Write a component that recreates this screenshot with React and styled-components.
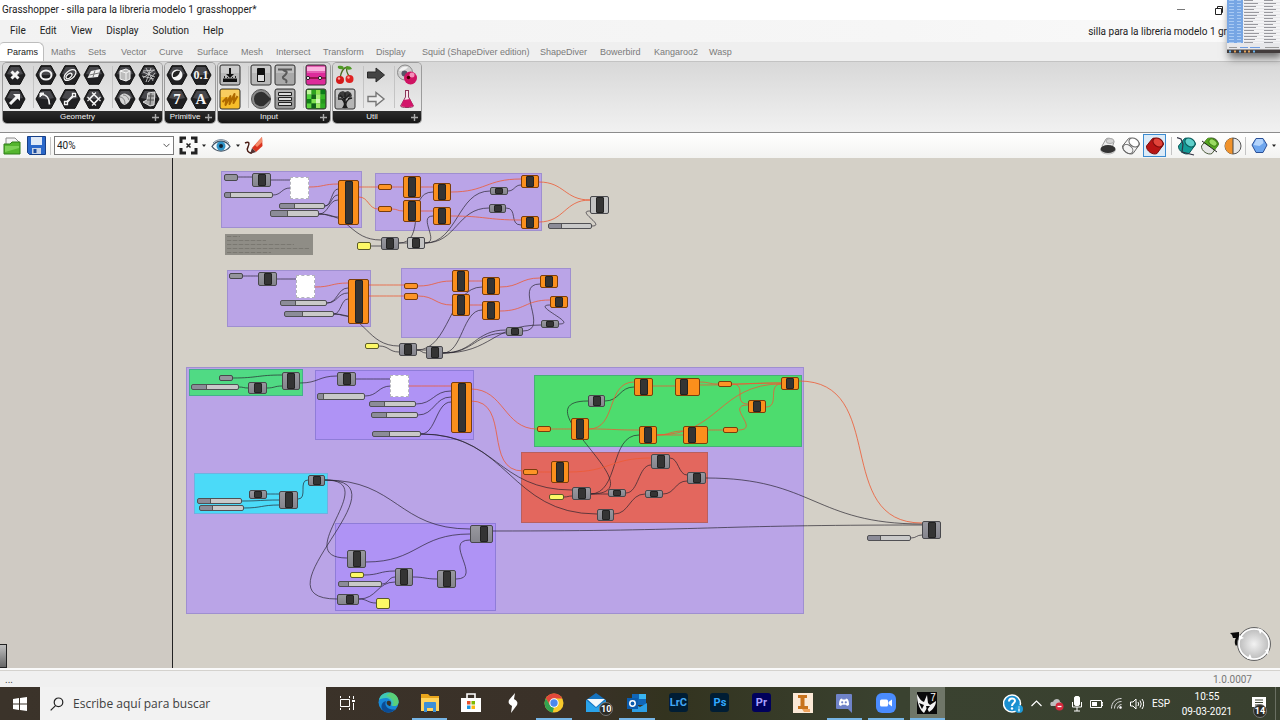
import React from "react";
import styled, { createGlobalStyle, css } from "styled-components";

const UI = `Roboto, "Open Sans", sans-serif`;
const RIBBON = `"Liberation Sans", Arial, sans-serif`;

const Global = createGlobalStyle`
  *, *::before, *::after { box-sizing: border-box; }
  body { margin: 0; background: #f0f0f0; font-family: ${UI}; color: #222; }
  button { font: inherit; color: inherit; background: none; border: 0; padding: 0; }
  svg { display: block; }
`;

const Page = styled.div`
  position: relative;
  display: flex;
  flex-direction: column;
  min-height: 100vh;
  overflow: hidden;
`;

/* ---------- window chrome ---------- */
const TitleBar = styled.header`
  display: flex;
  align-items: center;
  justify-content: space-between;
  height: 20px;
  padding: 0 56px 0 2px;
  background: #fff;
`;
const Title = styled.h1`
  margin: 0;
  font-size: 10px;
  font-weight: 400;
  line-height: 20px;
`;
const WindowButtons = styled.div`
  display: flex;
  gap: 28px;
`;
const MenuBar = styled.nav`
  display: flex;
  align-items: center;
  height: 22px;
  padding: 0 53px 0 10px;
  background: linear-gradient(90deg, #f2f2f2, #f6f6f6 70%, #fafafa);
  font-size: 10px;
`;
const MenuItem = styled.button`
  margin-right: 14px;
  line-height: 20px;
`;
const DocumentName = styled.span`
  margin-left: auto;
  white-space: nowrap;
`;
const TabStrip = styled.div`
  display: grid;
  grid-template-columns: 44px 37px 33px 38px 38px 44px 35px 47px 53px 46px 118px 60px 54px 55px 1fr;
  height: 19px;
  background: #efefef;
  font-family: ${RIBBON};
  font-size: 9px;
`;
const Tab = styled.button`
  padding-left: 7px;
  text-align: left;
  line-height: 20px;
  white-space: nowrap;
  color: #7a7a7a;
  ${(p) =>
    p.$active &&
    css`
      height: 20px;
      background: #fff;
      color: #222;
      border: 1px solid #bdbdbd;
      border-bottom: 0;
      border-left: 0;
      border-radius: 4px 6px 0 0;
      line-height: 17px;
    `}
`;

/* ---------- ribbon ---------- */
const Ribbon = styled.div`
  display: flex;
  align-items: flex-start;
  gap: 3px;
  height: 72px;
  padding: 1px 3px;
  border-top: 1px solid #c3c3c3;
  border-bottom: 1px solid #8c8c8c;
  background: linear-gradient(#d8d8d8, #f1f1f1);
`;
const Panel = styled.section`
  width: ${(p) => p.$width}px;
  height: 60px;
  border-radius: 4px;
  overflow: hidden;
  background: linear-gradient(#d6d6d6, #f0f0f0);
  box-shadow: 0 0 0 1px #9c9c9c;
  display: flex;
  flex-direction: column;
  justify-content: space-between;
`;
const PanelIcons = styled.div`
  display: flex;
  gap: 7px;
`;
const IconGroup = styled.div`
  display: grid;
  grid-template-columns: repeat(${(p) => p.$cols}, 24px);
  grid-auto-rows: 24px;
  & + & { box-shadow: -4px 0 0 -3px #c4c4c4; }
`;
const IconButton = styled.button`
  display: grid;
  place-items: center;
`;
const PanelLabel = styled.div`
  display: grid;
  grid-template-columns: 1fr 10px;
  align-items: center;
  height: 12px;
  background: linear-gradient(#2c2c2c, #141414);
  color: #f2f2f2;
  font-family: ${RIBBON};
  font-size: 8px;
  line-height: 12px;
  text-align: center;
`;

/* ---------- canvas toolbar ---------- */
const Toolbar = styled.div`
  display: flex;
  align-items: center;
  justify-content: space-between;
  height: 25px;
  padding: 0 4px 0 2px;
  background: linear-gradient(#fff, #f3f3f1);
`;
const ToolSet = styled.div`
  display: flex;
  align-items: center;
  gap: ${(p) => p.$gap}px;
`;
const ToolButton = styled.button`
  display: grid;
  place-items: center;
  width: ${(p) => p.$w || 22}px;
  height: 23px;
  ${(p) => p.$on && css`background: #dcebf8; border: 1px solid #3b8bd0;`}
`;
const Divider = styled.span`
  width: 1px;
  height: 18px;
  background: #c4c4c4;
`;
const ZoomField = styled.label`
  display: grid;
  width: 120px;
  height: 19px;
  border: 1px solid #7b7b7b;
  background: #fff;
  align-items: center;
  & > * { grid-area: 1 / 1; }
  & > svg { justify-self: end; margin-right: 3px; pointer-events: none; }
`;
const ZoomSelect = styled.select`
  appearance: none;
  width: 100%;
  height: 17px;
  padding: 0 2px;
  border: 0;
  background: none;
  font-family: ${UI};
  font-size: 10px;
  line-height: 16px;
  color: #222;
`;

/* ---------- canvas ---------- */
const Canvas = styled.main`
  position: relative;
  flex: 1;
  min-height: 510px;
  overflow: hidden;
  background: linear-gradient(90deg, #cfcac3 172px, #222 172px, #222 173px, #d4d0c7 173px);
`;
const WireLayer = styled.svg`
  position: absolute;
  inset: 0;
  width: 100%;
  height: 100%;
`;
const Placed = styled.div`
  position: absolute;
`;
const Group = styled(Placed)`
  background: ${(p) => p.$fill};
  border: 1px solid ${(p) => p.$edge};
`;
const Component = styled(Placed)`
  display: grid;
  grid-template-columns: ${(p) => (p.$bar ? `${p.$bar}px` : "1fr")} 8px 1fr;
  border: 1px solid ${(p) => (p.$tone === "orange" ? "#7a3d0c" : "#48484c")};
  border-radius: 2px;
  background: ${(p) =>
    ({ orange: "#fb8f1c", light: "#c2c2c2", gray: "linear-gradient(#98989f, #85858d)" })[p.$tone]};
  &::before {
    content: "";
    grid-column: 2;
    background: #343434;
    border: 1px solid #222;
    border-radius: 1px;
  }
`;
const Param = styled(Placed)`
  border: 1px solid ${(p) => ({ orange: "#7a3d0c", yellow: "#5a5a28", gray: "#48484c" })[p.$tone]};
  border-radius: 2px;
  background: ${(p) => ({ orange: "#fd9426", yellow: "#fdf966", gray: "#94949c" })[p.$tone]};
`;
const Slider = styled(Placed)`
  border: 1px solid #505054;
  border-radius: 2px;
  background: linear-gradient(90deg, #8c8c98 ${(p) => p.$grip}px, #555 ${(p) => p.$grip}px, #555 ${(p) => p.$grip + 1}px, #c9c9c9 ${(p) => p.$grip + 1}px);
`;
const Graph = styled(Placed)`
  background: #fff;
  border: 1px dashed #b4b4bc;
`;
const Note = styled(Placed)`
  padding: 2px;
  background: #8f8d86;
  display: grid;
  align-content: space-between;
`;
const NoteLine = styled.i`
  width: ${(p) => p.$w}%;
  height: 1px;
  background: repeating-linear-gradient(90deg, #7a7871 0 4px, #88867f 4px 6px);
`;
const EdgeTab = styled.div`
  position: absolute;
  left: 0;
  bottom: 0;
  width: 7px;
  height: 24px;
  border: 1px solid #222;
  border-left: 0;
  background: linear-gradient(#c0c0c0, #666);
`;
const Compass = styled.svg`
  position: absolute;
  right: 7px;
  bottom: 5px;
`;
const StatusBar = styled.footer`
  display: flex;
  justify-content: space-between;
  align-items: center;
  height: 19px;
  padding: 2px 28px 0 5px;
  border-top: 2px solid #fafafa;
  background: #f0f0f0;
  box-shadow: inset 0 1px 0 #d4d2ce;
  font-size: 10px;
  line-height: 14px;
  color: #444;
`;
const Version = styled.span`
  color: #777;
`;

/* ---------- taskbar ---------- */
const Taskbar = styled.footer`
  display: flex;
  height: 33px;
  background: linear-gradient(90deg, #3b332a, #3a3128 45%, #33331f 52%, #3a4230 70%, #39402f);
  color: #fff;
`;
const StartButton = styled.button`
  display: grid;
  place-items: center;
  width: 40px;
`;
const SearchBox = styled.label`
  display: flex;
  align-items: center;
  gap: 9px;
  width: 286px;
  padding-left: 10px;
  background: #f2f2f2;
`;
const SearchInput = styled.input`
  flex: 1;
  min-width: 0;
  border: 0;
  padding: 0;
  background: none;
  font-family: "Open Sans", sans-serif;
  font-size: 12px;
  line-height: 20px;
  &::placeholder { color: #404040; opacity: 1; }
`;
const Apps = styled.div`
  display: grid;
  grid-template-columns: repeat(15, 1fr);
  width: 622px;
`;
const AppButton = styled.button`
  position: relative;
  display: grid;
  place-items: center;
  margin: 0 3px;
  border-bottom: 2px solid ${(p) => (p.$open ? "#76b5e6" : "transparent")};
  background: ${(p) => (p.$focused ? "#6f7668" : "none")};
`;
const AdobeTile = styled.span`
  width: 19px;
  height: 19px;
  border-radius: 3px;
  background: ${(p) => p.$bg};
  color: ${(p) => p.$fg};
  font-size: 11px;
  font-weight: 700;
  line-height: 19px;
  text-align: center;
`;
const CountBadge = styled.span`
  position: absolute;
  right: ${(p) => p.$right}px;
  bottom: 2px;
  width: 14px;
  height: 14px;
  border-radius: 50%;
  border: 1px solid #777;
  background: #2b2b26;
  font-size: 9px;
  font-weight: 700;
  line-height: 12px;
  text-align: center;
`;
const Tray = styled.div`
  display: flex;
  align-items: center;
  gap: 8px;
  margin-left: auto;
  padding-right: 4px;
`;
const TrayText = styled.span`
  font-size: 10px;
  line-height: 15px;
  white-space: nowrap;
  text-align: center;
`;
const Clock = styled.time`
  width: 58px;
  font-size: 10px;
  line-height: 15px;
  text-align: center;
`;
const Notifications = styled.button`
  position: relative;
  width: 32px;
  height: 33px;
  display: grid;
  place-items: center;
  border-right: 1px solid #6a6f62;
`;
const Thumbnail = styled.div`
  position: absolute;
  top: 0;
  right: 0;
  box-shadow: 2px 5px 8px rgba(0, 0, 0, 0.55);
`;

/* ---------- ribbon icons ---------- */
const Hex = ({ children }) => (
  <svg width="22" height="22" viewBox="0 0 22 22">
    <path d="M1 11 6 1.700h10L21 11l-5 9.300H6z" fill="#202022" stroke="#111" strokeLinejoin="round" />
    <path d="M3 10 6.800 3h8.400L19 10c-5 1.500-11 1.500-16 0z" fill="#48484c" />
    <g fill="none" stroke="#f4f4f4" strokeWidth="1.700">{children}</g>
  </svg>
);
const Tile = ({ fill = "#b9b9b9", children }) => (
  <svg width="22" height="22" viewBox="0 0 22 22">
    <rect x="1" y="1" width="20" height="20" rx="2" fill={fill} stroke="#333" />
    <path d="M2 2h18v7H2z" fill="#fff" opacity=".25" />
    {children}
  </svg>
);
const Plain = ({ children }) => <svg width="22" height="22" viewBox="0 0 22 22">{children}</svg>;
const serif = { fontFamily: '"Liberation Serif", serif', fontWeight: 700, fill: "#f4f4f4", stroke: "none", textAnchor: "middle" };

const GREEN = ["#bff59b", "#2ea31f", "#8be04c", "#0b7d1a", "#4fd43c", "#16651a", "#aaf07a", "#36b827", "#127f18", "#7fe352", "#d2f9b9", "#26991f", "#5cd53e", "#10601a", "#9bea63", "#2fae26"];

const PANELS = [
  {
    name: "Geometry", width: 159,
    groups: [
      { cols: 1, icons: [
        ["Point", <Hex><path d="m7.500 7.500 7 7m0-7-7 7" strokeWidth="3" /></Hex>],
        ["Vector", <Hex><path d="m6 16 7-7" strokeWidth="3" /><path d="M9 6h7v7z" fill="#f4f4f4" stroke="none" /></Hex>],
      ] },
      { cols: 3, icons: [
        ["Circle", <Hex><ellipse cx="11" cy="11" rx="5.500" ry="4.500" strokeWidth="2" /></Hex>],
        ["Curve", <Hex><ellipse cx="11" cy="11" rx="7" ry="4" transform="rotate(-40 11 11)" strokeWidth="1.200" /><ellipse cx="10" cy="12" rx="3.500" ry="2" transform="rotate(-40 10 12)" strokeWidth="1.200" /></Hex>],
        ["Plane", <Hex><path d="M4.500 14 8 7l9.500-2-2.500 8z" fill="#eee" stroke="none" /><path d="M6.500 11 16 9M12 6.500 10 13" stroke="#777" strokeWidth="1" /></Hex>],
        ["Circular Arc", <Hex><path d="M6.500 6.500c5 0 8 4 8 10" /><path d="M5 9V5h4z" fill="#f4f4f4" strokeWidth="1" /></Hex>],
        ["Line", <Hex><path d="m7.500 14.500 7-7" strokeWidth="2.200" /><path d="M5.500 13.500h3v3h-3zM13.500 5.500h3v3h-3z" fill="#222" strokeWidth="1.300" /></Hex>],
        ["Rectangle", <Hex><path d="m11 6.500 4.500 4.500-4.500 4.500L6.500 11z" /><path d="m9 4.500 2 2 2-2M9 17.500l2-2 2 2M4.500 9l2 2-2 2M17.500 9l-2 2 2 2" strokeWidth="1.200" /></Hex>],
      ] },
      { cols: 2, icons: [
        ["Box", <Hex><path d="m6 7 6-2 4 2v8l-4 2-6-2z" fill="#bcbcbc" strokeWidth="1" /><path d="m6 7 6 2 4-2M12 9v8" strokeWidth="1" /></Hex>],
        ["Mesh", <Hex><path d="m5 8 12 5M4 12l12 3M8 4l7 13M13 4 8 18M5 14 16 6M10 18l7-9M5 7l12-1" stroke="#c9c9c9" strokeWidth=".9" /></Hex>],
        ["Brep", <Hex><path d="M5.500 9c3-5 7-4 11 0 0 4-3 7-6 8-3-1-5-4-5-8z" fill="#d5d5d5" stroke="none" /><path d="M6 9c3 0 5 3 5 7M9 7c3 0 5 2 6 5" stroke="#888" strokeWidth="1" /></Hex>],
        ["Surface", <Hex><path d="M10 5l7-1-1 13-4 1-7-4 4-2z" fill="#aaa" stroke="#ddd" strokeWidth="1" /><path d="M10 8h6M9 12h7M13 5l-1 12" stroke="#555" strokeWidth="1" /></Hex>],
      ] },
    ],
  },
  {
    name: "Primitive", width: 50,
    groups: [
      { cols: 2, icons: [
        ["Boolean", <Hex><circle cx="11" cy="11" r="5.500" fill="#f4f4f4" stroke="none" /><path d="M7 13c-1-5 3-7 7-6-1 4-3 6-7 6z" fill="#222" stroke="none" /></Hex>],
        ["Number", <Hex><text x="11" y="15" fontSize="12" {...serif}>0.1</text></Hex>],
        ["Integer", <Hex><text x="11" y="16" fontSize="15" {...serif}>7</text></Hex>],
        ["Text", <Hex><text x="11" y="16" fontSize="15" {...serif}>A</text></Hex>],
      ] },
    ],
  },
  {
    name: "Input", width: 112,
    groups: [
      { cols: 1, icons: [
        ["Number Slider", <Tile><path d="M10 4h2v6h3l-4 4-4-4h3zM4 14.500h14V18H4z" fill="#111" /><path d="M5.500 14v-2M8.500 14v-1M13.500 14v-1M16.500 14v-2" stroke="#222" /></Tile>],
        ["Graph Mapper", <Tile fill="#f7bd2a"><path d="m3.500 14 4-4-1 7 5-9-1 8 5-10-1 9 4-7" fill="none" stroke="#b06a00" strokeWidth="2" strokeLinejoin="round" /></Tile>],
      ] },
      { cols: 2, icons: [
        ["Toggle", <Tile><path d="M7.500 4.500h7v13h-7z" fill="#ddd" stroke="#111" /><path d="M8 5h6v6H8z" fill="#111" /></Tile>],
        ["Gene Pool", <Tile fill="#a9a9a9"><path d="M4 5.500h14M9 6c3 2 5 1 3 4s-4 2-3 4 5 1 3 5" fill="none" stroke="#5a5a5a" strokeWidth="2" /></Tile>],
        ["Knob", <Plain><circle cx="11" cy="11" r="9.500" fill="#8a8a8a" stroke="#555" /><path d="M4 11a7 7 0 0 1 12.500-4.500L21 11l-4.500 4.500A7 7 0 0 1 4 11z" fill="#303030" /></Plain>],
        ["Value List", <Tile fill="#9a9a9a"><path d="M4.500 4.500h13v3h-13zM4.500 9.500h13v3h-13zM4.500 14.500h13v3h-13z" fill="#ddd" stroke="#222" /></Tile>],
      ] },
      { cols: 1, icons: [
        ["Gradient", <Tile fill="#dd2b9a"><path d="M2 3h18v4H2z" fill="#fbb2df" /><path d="M1 14h20" stroke="#500" strokeWidth="1.200" /><circle cx="3" cy="14" r="1.600" fill="#fff" stroke="#222" /><circle cx="15" cy="14" r="1.600" fill="#fff" stroke="#222" /></Tile>],
        ["Image Sampler", <Tile fill="#2a8f1e">{GREEN.map((c, i) => <rect key={i} x={2 + (i % 4) * 4.5} y={2 + Math.floor(i / 4) * 4.5} width="4.500" height="4.500" fill={c} />)}</Tile>],
      ] },
    ],
  },
  {
    name: "Util", width: 88,
    groups: [
      { cols: 1, icons: [
        ["Cherry Picker", <Plain><path d="M6 14C7 8 9 4 13 3c-1 4 0 7 3 10" fill="none" stroke="#4a6a1c" strokeWidth="1.300" /><path d="M10 5C5 6 3 4 4 2c4-1 6 0 6 3zM11 4c3-3 6-2 7 1-3 1-5 1-7-1z" fill="#4f9a25" /><circle cx="6" cy="16" r="4" fill="#d31a1a" /><circle cx="15.500" cy="15" r="4" fill="#e02222" /><circle cx="5" cy="14.500" r="1.200" fill="#ff9d9d" /><circle cx="14.500" cy="13.500" r="1.200" fill="#ff9d9d" /></Plain>],
        ["Tree", <Tile fill="#b5b5b5"><path d="M10 20c1-4 1-6-2-9M12 20c-1-5 0-7 3-9M11 15V5M11 12 6 7M11 11l5-5M8 11l-4 0M14 11l4-1" fill="none" stroke="#1c1c1c" strokeWidth="1.500" /><path d="M4 7l2-3 3-1 2 1 3-1 3 2 1 3-2 2-2-1-2 1-2-1-2 1-2-1-2 2z" fill="#222" opacity=".85" /><path d="M8 20l2-3h2l2 3z" fill="#1c1c1c" /></Tile>],
      ] },
      { cols: 1, icons: [
        ["Relay", <Plain><path d="M2.500 8h8.500V4l8.500 7L11 18v-4H2.500z" fill="#444" stroke="#2a2a2a" /></Plain>],
        ["Jump", <Plain><path d="M3 8.500h8v-4l8 6.500-8 6.500v-4H3z" fill="#eee" stroke="#777" strokeWidth="1.400" /></Plain>],
      ] },
      { cols: 1, icons: [
        ["Cluster Input", <Plain><circle cx="9" cy="8.500" r="7.500" fill="#cfcfcf" stroke="#8a8a8a" /><circle cx="8.500" cy="9.500" r="3" fill="#556" /><path d="M3 7c1-4 6-5 9-4-2 3-6 4-9 4z" fill="#f2f2f2" /><circle cx="14.500" cy="14" r="6.500" fill="#cf1463" /><circle cx="16" cy="11" r="2.500" fill="#f58fba" /><circle cx="12.500" cy="13.500" r="1.700" fill="#400" /></Plain>],
        ["Galapagos", <Plain><path d="M9 2.500h4M9.500 3v6l-5 9c0 2 13 2 13 0l-5-9V3" fill="#f7e6ee" stroke="#8b3558" /><path d="m7.500 12 6.500-1 3.500 7c-1 1.500-11.500 1.500-12.500 0z" fill="#d3156a" /></Plain>],
      ] },
    ],
  },
];

/* ---------- diagram data, in window coordinates ---------- */
const ORIGIN_Y = 158;
const box = (x1, y1, x2, y2) => ({ left: x1, top: y1 - ORIGIN_Y, width: x2 - x1, height: y2 - y1 });

const LILAC = ["#baa4e7", "#9f8fd0"];
const VIOLET = ["#af93f5", "#8f7cd8"];
const groups = [
  [221, 171, 362, 228, ...LILAC],
  [375, 173, 542, 231, ...LILAC],
  [227, 270, 371, 327, ...LILAC],
  [401, 268, 571, 338, ...LILAC],
  [186, 367, 804, 614, ...LILAC],
  [189, 369, 303, 396, "#50da84", "#44b08a"],
  [315, 370, 474, 440, ...VIOLET],
  [534, 375, 802, 447, "#4ddc6e", "#45b077"],
  [521, 452, 708, 523, "#e3675e", "#b8605f"],
  [194, 473, 328, 514, "#4bdaf8", "#6fb2e0"],
  [335, 523, 496, 611, ...VIOLET],
];
const components = [
  ["gray", 252, 173, 271, 187], ["orange", 338, 180, 359, 225], ["gray", 381, 237, 399, 250],
  ["light", 407, 237, 425, 249], ["orange", 403, 176, 421, 198], ["orange", 403, 200, 421, 222],
  ["orange", 433, 183, 451, 201], ["orange", 433, 207, 451, 225], ["gray", 490, 187, 508, 195],
  ["gray", 489, 204, 506, 213], ["orange", 521, 175, 539, 188], ["orange", 521, 216, 539, 229],
  ["light", 590, 196, 609, 214],
  ["gray", 258, 272, 277, 286], ["orange", 348, 279, 369, 324], ["gray", 399, 343, 417, 356],
  ["gray", 426, 346, 443, 359], ["orange", 452, 270, 469, 292], ["orange", 452, 294, 470, 316],
  ["orange", 482, 277, 500, 295], ["orange", 482, 301, 500, 320], ["orange", 540, 275, 558, 288],
  ["orange", 550, 296, 568, 308], ["gray", 541, 320, 559, 328], ["gray", 506, 327, 523, 336],
  ["gray", 248, 382, 267, 394], ["gray", 282, 372, 300, 390], ["gray", 337, 372, 356, 386],
  ["orange", 451, 382, 472, 433], ["gray", 308, 475, 325, 486], ["gray", 249, 490, 267, 499],
  ["gray", 279, 491, 298, 509], ["orange", 571, 418, 589, 440], ["gray", 588, 395, 605, 407],
  ["orange", 634, 378, 653, 396], ["orange", 675, 378, 700, 396, 4], ["orange", 781, 377, 799, 390],
  ["orange", 748, 400, 766, 413], ["orange", 639, 426, 657, 444], ["orange", 683, 426, 708, 444, 4],
  ["orange", 551, 461, 569, 483], ["gray", 572, 487, 591, 500], ["gray", 597, 509, 614, 521],
  ["gray", 608, 489, 626, 497], ["gray", 651, 454, 670, 469], ["gray", 645, 490, 663, 498],
  ["gray", 687, 472, 706, 484], ["gray", 470, 525, 493, 543, 9], ["gray", 347, 550, 366, 568],
  ["gray", 337, 594, 359, 605, 8], ["gray", 395, 568, 413, 586], ["gray", 437, 570, 456, 588],
  ["gray", 922, 521, 941, 539],
];
const params = [
  ["gray", 224, 174, 238, 181], ["orange", 378, 184, 392, 190], ["orange", 378, 206, 392, 212],
  ["yellow", 357, 242, 371, 250], ["gray", 229, 273, 243, 279], ["yellow", 365, 343, 379, 349],
  ["orange", 404, 283, 418, 289], ["orange", 404, 293, 418, 300], ["gray", 219, 375, 233, 381],
  ["orange", 537, 426, 551, 432], ["orange", 718, 381, 732, 387], ["orange", 723, 427, 738, 433],
  ["orange", 523, 469, 538, 475], ["yellow", 549, 494, 564, 500], ["yellow", 350, 572, 364, 578],
  ["yellow", 376, 598, 390, 609],
];
const sliders = [
  [224, 192, 273, 198, 5], [279, 203, 325, 209, 14], [270, 210, 319, 217, 16], [548, 223, 592, 229, 12],
  [280, 300, 327, 306, 14], [284, 311, 334, 317, 17], [191, 384, 239, 390, 14], [317, 393, 365, 400, 5],
  [369, 401, 416, 407, 14], [371, 412, 418, 418, 14], [372, 431, 421, 437, 16], [197, 498, 242, 504, 12],
  [199, 505, 244, 511, 12], [338, 581, 382, 587, 9], [867, 535, 911, 541, 12],
];
const graphs = [[290, 177, 309, 199], [296, 275, 315, 298], [390, 375, 409, 397]];

/* each wire: start, end, optional reach of its two horizontal handles */
const darkWires = [
  [238, 177, 252, 177], [271, 180, 290, 180], [273, 195, 290, 188], [325, 206, 338, 189], [325, 206, 338, 195],
  [319, 214, 338, 200], [319, 214, 338, 217], [319, 214, 381, 240], [371, 246, 381, 246], [399, 243, 407, 243],
  [399, 243, 433, 192, 28], [425, 243, 433, 216, 16], [425, 243, 490, 191], [425, 243, 489, 208],
  [508, 191, 521, 185], [506, 208, 521, 225, 12], [592, 226, 590, 211, 14],
  [243, 276, 258, 276], [277, 279, 297, 279], [327, 303, 348, 288], [327, 303, 348, 293], [334, 314, 348, 299],
  [334, 314, 348, 316], [334, 314, 399, 346], [379, 346, 399, 352], [417, 350, 426, 350], [417, 350, 426, 353], [417, 350, 482, 287],
  [443, 353, 482, 310], [443, 353, 506, 330], [443, 353, 506, 333], [443, 353, 541, 325], [523, 331, 540, 284, 28], [559, 324, 550, 305, 20],
  [233, 378, 282, 375], [239, 387, 248, 388], [267, 388, 282, 386], [300, 383, 337, 376], [356, 379, 391, 379],
  [365, 396, 391, 386], [416, 404, 451, 391], [418, 415, 451, 397], [421, 434, 451, 402], [421, 434, 572, 490],
  [421, 434, 597, 514], [267, 494, 279, 494], [242, 501, 279, 500], [244, 508, 279, 505], [298, 499, 308, 480, 10],
  [325, 480, 470, 529], [325, 480, 347, 558, 59], [325, 480, 337, 599, 88], [366, 562, 470, 534],
  [364, 575, 395, 571], [382, 584, 395, 577], [359, 599, 395, 582], [359, 599, 376, 603], [413, 577, 437, 579],
  [456, 579, 470, 540, 28], [493, 531, 922, 525], [706, 478, 922, 524], [911, 538, 922, 535],
  [590, 494, 588, 401, 72], [590, 494, 639, 435, 30], [605, 401, 634, 387], [564, 497, 572, 496], [590, 494, 608, 494],
  [626, 493, 651, 465], [614, 514, 645, 494], [663, 494, 687, 481], [670, 458, 687, 475],
];
const redWires = [
  [309, 187, 338, 184], [359, 187, 378, 187], [359, 197, 378, 209], [392, 187, 403, 187], [392, 209, 403, 211],
  [421, 187, 433, 187], [421, 211, 433, 211], [451, 192, 521, 179], [451, 216, 521, 220], [539, 182, 590, 200], [539, 222, 590, 200],
  [315, 287, 348, 283], [369, 285, 404, 285], [369, 296, 404, 296], [418, 286, 452, 281], [418, 296, 452, 305],
  [469, 281, 482, 281], [470, 305, 482, 305], [500, 287, 540, 278], [500, 311, 550, 300],
  [409, 386, 451, 386], [471, 389, 537, 429], [471, 401, 523, 471, 40], [799, 381, 922, 523, 90],
  [551, 429, 571, 429], [589, 429, 634, 382, 28], [589, 429, 639, 430], [653, 386, 675, 386], [700, 382, 718, 384],
  [700, 385, 781, 383], [732, 384, 781, 383], [732, 384, 748, 404, 16], [766, 407, 781, 384, 14], [657, 435, 683, 431],
  [657, 435, 683, 435], [657, 435, 781, 384], [708, 430, 723, 430], [738, 430, 748, 405, 24],
  [538, 472, 551, 472], [569, 472, 651, 458],
];
const wirePath = ([x1, y1, x2, y2, reach = (x2 - x1) / 2]) =>
  `M${x1} ${y1}C${x1 + reach} ${y1} ${x2 - reach} ${y2} ${x2} ${y2}`;

const Diagram = () => (
  <Canvas aria-label="Definition canvas">
    {groups.map(([a, b, c, d, fill, edge], i) => <Group key={i} $fill={fill} $edge={edge} style={box(a, b, c, d)} />)}
    <WireLayer fill="none">
      <g transform={`translate(0 ${-ORIGIN_Y})`}>
        <path d={darkWires.map(wirePath).join("")} stroke="#25222c" strokeOpacity=".68" />
        <path d={redWires.map(wirePath).join("")} stroke="#ee5a35" strokeOpacity=".8" />
      </g>
    </WireLayer>
    {sliders.map(([a, b, c, d, grip], i) => <Slider key={i} $grip={grip} style={box(a, b, c, d)} />)}
    {params.map(([tone, ...r], i) => <Param key={i} $tone={tone} style={box(...r)} />)}
    {components.map(([tone, a, b, c, d, bar], i) => <Component key={i} $tone={tone} $bar={bar} style={box(a, b, c, d)} />)}
    {graphs.map((r, i) => <Graph key={i} style={box(...r)} />)}
    <Note style={box(225, 234, 313, 255)}>
      {[15, 46, 80, 98, 52].map((w, i) => <NoteLine key={i} $w={w} />)}
    </Note>
    <EdgeTab />
    <Compass width="46" height="38" viewBox="0 0 46 38">
      <defs>
        <radialGradient id="dial"><stop offset="0" stopColor="#f2f2f2" /><stop offset="1" stopColor="#b8b8b8" /></radialGradient>
      </defs>
      <path d="m3 8 9-1v3l3-1-3 9-3 3c-2-3-1-7 0-8H6l-1-3z" fill="#0a0a0a" />
      <circle cx="27" cy="19" r="16.500" fill="url(#dial)" stroke="#666" />
      <circle cx="27" cy="19" r="15" fill="none" stroke="#fff" strokeWidth="1.500" />
      <path d="m31 3 5 2-3 4zM12 10l5 3-5 2zM42 24l-4 1 3 5zM20 34l3-5 2 5z" fill="#fff" />
    </Compass>
  </Canvas>
);

/* ---------- small drawings ---------- */
const Cylinder = ({ a, b, line, inner, extra }) => (
  <svg width="20" height="20" viewBox="0 0 20 20">
    <path d="M1.500 10 7.500 2.500C10 1 18.500 4 18.500 8.500L12 17.500C8 19.500 1 15 1.500 10z" fill={a} stroke={line} />
    <ellipse cx="13" cy="6.500" rx="5.500" ry="4" transform="rotate(35 13 6.500)" fill={b} stroke={line} />
    {inner && <ellipse cx="7" cy="13" rx="5.500" ry="3.800" transform="rotate(40 7 13)" fill="none" stroke={line} />}
    {extra}
  </svg>
);
const Caret = () => <svg width="4" height="3" viewBox="0 0 4 3"><path d="M0 .5h4L2 3z" fill="#222" /></svg>;

const previewTools = [
  ["No preview", <svg width="20" height="20" viewBox="0 0 20 20"><path d="M4 10 8 3c2-2 8 0 8 3l-2 6H5z" fill="#ececec" stroke="#999" /><ellipse cx="12" cy="5" rx="4" ry="2.500" fill="#d5d5d5" stroke="#aaa" /><path d="M2.500 13.500c0 6 15 6 15 0" fill="#ddd" stroke="#bbb" /><ellipse cx="10" cy="13" rx="7.500" ry="4" fill="#333" /></svg>],
  ["Wireframe preview", <Cylinder a="#f4f4f4" b="#fff" line="#666" inner />],
  ["Shaded preview", <Cylinder a="#b81414" b="#e2443a" line="#7b0b0b" />],
];
const meshTools = [
  ["Selected preview", <Cylinder a="#149a96" b="#5fcfca" line="#0a5a5a" extra={<path d="M0 1.500 4 3l2 5-1 8 12 3" fill="none" stroke="#334" strokeWidth="1.200" />} />],
  ["Document preview", <Cylinder a="#e6e6e6" b="#8bcf50" line="#4a5a3a" extra={<><path d="M3.500 7 7.500 2.500C10 1 18.500 4 18.500 8.500L15 14z" fill="#55a51f" /><ellipse cx="13" cy="6.500" rx="4.500" ry="3" transform="rotate(35 13 6.500)" fill="#9bdb62" stroke="#3c7f12" /><path d="m2 5 15 11" stroke="#222" /></>} />],
  ["Mesh quality", <svg width="20" height="20" viewBox="0 0 20 20"><circle cx="10" cy="10" r="8" fill="#e6e6e6" stroke="#555" /><path d="M10 2a8 8 0 0 0 0 16z" fill="#f0922b" /><path d="M10 2v16" stroke="#444" /></svg>],
];

const Search = () => <svg width="14" height="14" viewBox="0 0 14 14" fill="none" stroke="#222" strokeWidth="1.200"><circle cx="8.500" cy="5.300" r="4.300" /><path d="m5.500 8.600-4.800 4.800" /></svg>;

const apps = [
  { name: "Vista de tareas", art: <svg width="16" height="14" viewBox="0 0 16 14" fill="none" stroke="#fff"><path d="M1.500 3.500h9v7h-9zM1.500 0v2M10.500 0v2M1.500 12v2M10.500 12v2M14.500 0v3M14.500 7v7" /><path d="M13 5h3" strokeWidth="2" /></svg> },
  { name: "Edge", art: <svg width="21" height="21" viewBox="0 0 21 21"><circle cx="10.500" cy="10.500" r="10" fill="#1788d8" /><path d="M1 8C2 2 8 0 11 .5c6 .5 10 5 9.500 10-.5 3-3 4-6 3.500-2-.5-1-1-1-3 0-3-3-5-6-5S2 7 1 8z" fill="#3fc7b6" /><path d="M12 .6c5 .4 9 5 8.500 9.900-.5 3-3 4-6 3.500 3-3-.5-9-6.500-10z" fill="#62d36a" opacity=".8" /><path d="M8 9c-2 4 1 9 9 8.500-3 3.500-8 4-11.500 1.500C2 16 3 10 8 9z" fill="#0c4c94" /><path d="M9 9.500c1-1.500 4-1 4 1.500 0 1.500-1 2-.5 3-3 0-4.500-2.500-3.500-4.500z" fill="#3a3128" /></svg> },
  { name: "Explorador", open: true, art: <svg width="20" height="18" viewBox="0 0 20 18"><path d="M1 0h7l2 2h9v13H1z" fill="#e9a51c" /><path d="M1 4h18v13H1z" fill="#ffd35c" /><path d="M4 9q0-1 1-1h10q1 0 1 1v9h-3v-4H7v4H4z" fill="#3b8fd6" /></svg> },
  { name: "Store", art: <svg width="20" height="21" viewBox="0 0 20 21"><path d="M6 6V2h8v4" fill="none" stroke="#fff" strokeWidth="1.600" /><path d="M0 6h20v14H0z" fill="#fff" /><path d="M6 9h3.500v3.500H6z" fill="#e8502b" /><path d="M10.500 9H14v3.500h-3.500z" fill="#7fba00" /><path d="M6 13.500h3.500V17H6z" fill="#1b95e0" /><path d="M10.500 13.500H14V17h-3.500z" fill="#fdb913" /></svg> },
  { name: "Sketch", art: <svg width="12" height="20" viewBox="0 0 12 20"><path d="M8 0 2 7c-1 3 0 4 3 6l-1 7 6-8c1-3 0-4-3-6z" fill="#fff" /></svg> },
  { name: "Chrome", open: true, art: <svg width="20" height="20" viewBox="0 0 20 20"><circle cx="10" cy="10" r="9.500" fill="#f7c92c" /><path d="M1.800 5.300A9.500 9.500 0 0 1 18.300 5.500H10l-4 7z" fill="#e2483b" /><path d="M1.800 5.300 6.200 12.500 10 14.500l-1.300 5A9.500 9.500 0 0 1 1.800 5.300z" fill="#33a351" /><circle cx="10" cy="10" r="4.700" fill="#fff" /><circle cx="10" cy="10" r="3.700" fill="#4b87ee" /></svg> },
  { name: "Correo", badge: "10", art: <svg width="20" height="20" viewBox="0 0 20 20"><path d="m0 7 10-7 10 7v12H0z" fill="#1672bd" /><path d="M1 6h18l-9 8z" fill="#f4f8fb" /><path d="m0 7 10 8 10-8v12H0z" fill="#2aa3ea" /></svg> },
  { name: "Outlook", open: true, art: <svg width="20" height="20" viewBox="0 0 20 20"><path d="M5 1h14v11H5z" fill="#1066b8" /><path d="M12 1h7v5h-7z" fill="#39b4f0" /><path d="M5 10l8 4 7-4v9H5z" fill="#2c9fe6" /><path d="M0 5h11v11H0z" fill="#0b5cad" /><circle cx="5.500" cy="10.500" r="2.700" fill="none" stroke="#fff" strokeWidth="1.500" /></svg> },
  { name: "Lightroom", art: <AdobeTile $bg="#001d34" $fg="#43a8f5">LrC</AdobeTile> },
  { name: "Photoshop", art: <AdobeTile $bg="#001d34" $fg="#31a8ff">Ps</AdobeTile> },
  { name: "Premiere", art: <AdobeTile $bg="#00005b" $fg="#a9a0ff">Pr</AdobeTile> },
  { name: "Inventor", art: <svg width="20" height="20" viewBox="0 0 20 20"><path d="M0 0h20v20H0z" fill="#fbe9d6" /><path d="M5 2h9v3h-2.500v8H15v3H5v-3h2.500V5H5z" fill="#c8731c" /><path d="M9 16h8v3h-6z" fill="#efa35c" /></svg> },
  { name: "Discord", open: true, art: <svg width="16" height="20" viewBox="0 0 16 20"><path d="M1 1h14q1 0 1 1v18l-4-4H1q-1 0-1-1V2q0-1 1-1z" fill="#6f83c8" /><path d="M3 12c0-3 .5-5 1.500-6L6 5.500l.5 1h3l.5-1 1.500.5c1 1 1.500 3 1.500 6l-2 1-1-1.300H6L5 13z" fill="#fff" /><circle cx="6.200" cy="9.300" r="1.100" fill="#6f83c8" /><circle cx="9.800" cy="9.300" r="1.100" fill="#6f83c8" /></svg> },
  { name: "Zoom", open: true, art: <svg width="20" height="20" viewBox="0 0 20 20"><rect width="20" height="20" rx="6" fill="#4a8cff" /><rect x="4" y="6.500" width="8" height="7" rx="1.500" fill="#fff" /><path d="m12.500 9 3.500-2.500v7L12.500 11z" fill="#fff" /></svg> },
  { name: "Rhino 7", open: true, focused: true, art: <svg width="20" height="22" viewBox="0 0 20 22"><path d="M0 0h20v22H0z" fill="#0a0a0a" /><path d="M0 2c2 4 4 7 7 8l3-7 1 8 2 2 6-4c0 4-3 9-7 11l-2-4-3 5C3 18 0 12 0 2z" fill="#f4f4f4" /><path d="m2 11 5 2-2 4zM9 14l4 0-3 4z" fill="#0a0a0a" /><text x="16" y="9" fontSize="10" fill="#fff" textAnchor="middle" fontFamily="Liberation Sans, sans-serif">7</text></svg> },
];

const rows = Array.from({ length: 15 }, (_, i) => i);
const Preview = () => (
  <Thumbnail aria-hidden="true">
    <svg width="53" height="53" viewBox="0 0 53 53">
      <path d="M0 0h53v53H0z" fill="#f3f3f5" />
      <path d="M0 0h16v43H0z" fill="#77a6e4" />
      {rows.map((i) => (
        <g key={i}>
          <path d={`M16 ${i * 3 + 2}.5h37`} stroke="#d8d8dc" strokeWidth=".5" />
          <path d={`M2 ${i * 3}.5h5M10 ${i * 3}.5h4`} stroke="#a9caf3" />
          <path d={`M17 ${i * 3}.5h${9 + ((i * 5) % 7)}M37 ${i * 3}.5h${9 + ((i * 3) % 6)}`} stroke="#8d8d94" strokeWidth=".9" />
        </g>
      ))}
      <path d="M0 43h53v6H0z" fill="#e7e7ea" />
      <path d="M2 47.500h8M38 47.500h14" stroke="#999" />
      <path d="M13 47.500h8M23 47.500h10" stroke="#6d9be0" />
      <path d="M0 49.500h53V53H0z" fill="#423c3c" />
      <path d="M2 51.500h2M12 51.500h2M26 51.500h2" stroke="#6bb5ee" strokeWidth="2" />
      <path d="M7 51.500h2M17 51.500h2M21 51.500h2" stroke="#e2a45d" strokeWidth="2" />
    </svg>
  </Thumbnail>
);

const TABS = ["Params", "Maths", "Sets", "Vector", "Curve", "Surface", "Mesh", "Intersect", "Transform", "Display", "Squid (ShapeDiver edition)", "ShapeDiver", "Bowerbird", "Kangaroo2", "Wasp"];

export default function App() {
  return (
    <Page>
      <Global />
      <TitleBar>
        <Title>Grasshopper - silla para la libreria modelo 1 grasshopper*</Title>
        <WindowButtons>
          <IconButton aria-label="Minimize"><svg width="10" height="10" viewBox="0 0 10 10"><path d="M1 4.500h8" stroke="#777" /></svg></IconButton>
          <IconButton aria-label="Restore"><svg width="10" height="10" viewBox="0 0 10 10" fill="none" stroke="#222"><path d="M1.500 3.500h6v6h-6zM3.500 3V1.500h5v6H8" /></svg></IconButton>
        </WindowButtons>
      </TitleBar>
      <MenuBar>
        {["File", "Edit", "View", "Display", "Solution", "Help"].map((m) => <MenuItem key={m}>{m}</MenuItem>)}
        <DocumentName>silla para la libreria modelo 1 gr</DocumentName>
      </MenuBar>
      <TabStrip role="tablist">
        {TABS.map((t, i) => <Tab key={t} role="tab" aria-selected={i === 0} $active={i === 0}>{t}</Tab>)}
      </TabStrip>
      <Ribbon>
        {PANELS.map((p) => (
          <Panel key={p.name} $width={p.width}>
            <PanelIcons>
              {p.groups.map((g, i) => (
                <IconGroup key={i} $cols={g.cols}>
                  {g.icons.map(([label, art]) => <IconButton key={label} aria-label={label}>{art}</IconButton>)}
                </IconGroup>
              ))}
            </PanelIcons>
            <PanelLabel>
              <span>{p.name}</span>
              <svg width="7" height="7" viewBox="0 0 7 7"><path d="M3.500 0v7M0 3.500h7" stroke="#aaa" strokeWidth="1.400" /></svg>
            </PanelLabel>
          </Panel>
        ))}
      </Ribbon>
      <Toolbar>
        <ToolSet $gap={3}>
          <ToolButton $w={20} aria-label="Open">
            <svg width="18" height="20" viewBox="0 0 18 20"><path d="M3 2h9l4 4v7H3z" fill="#f4f4f4" stroke="#8a8a8a" /><path d="M1 8h6l2-2h8v12H1z" fill="#55b52f" stroke="#2f7d18" /><path d="M2 10h14v2L2 16z" fill="#8fdc68" opacity=".7" /></svg>
          </ToolButton>
          <ToolButton $w={22} aria-label="Save">
            <svg width="19" height="19" viewBox="0 0 19 19"><path d="M.5.5h18v18h-16l-2-2z" fill="#2a67c9" stroke="#173f86" /><path d="M4 1h11v8H4z" fill="#dfe9f7" /><path d="M5 12h9v6H5z" fill="#c9d3e4" /><path d="M6.500 13h3v4h-3z" fill="#1d4c9f" /></svg>
          </ToolButton>
          <Divider />
          <ZoomField>
            <ZoomSelect defaultValue="40%" aria-label="Zoom level"><option>40%</option></ZoomSelect>
            <svg width="7" height="5" viewBox="0 0 7 5" fill="none" stroke="#555"><path d="m.5.8 3 3 3-3" /></svg>
          </ZoomField>
          <ToolButton aria-label="Zoom extents">
            <svg width="19" height="19" viewBox="0 0 19 19" fill="none" stroke="#222" strokeWidth="3"><path d="M7 2H2v5M12 2h5v5M7 17H2v-5M12 17h5v-5" /><path d="m7.500 7.500 4 4m0-4-4 4" strokeWidth="1.500" /></svg>
          </ToolButton>
          <ToolButton $w={4} aria-label="Zoom extents options"><Caret /></ToolButton>
          <ToolButton $w={24} aria-label="Named views">
            <svg width="20" height="14" viewBox="0 0 20 14"><path d="M1 7.500C5 .5 15 .5 19 7.500c-4 6-14 6-18 0z" fill="#f3f8fb" stroke="#456" strokeWidth="1.300" /><circle cx="10" cy="7" r="4.500" fill="#2f93c7" /><circle cx="10" cy="7" r="2" fill="#123" /><path d="M2 4C6-.5 14-.5 18 4" fill="none" stroke="#789" /></svg>
          </ToolButton>
          <ToolButton $w={4} aria-label="Named view options"><Caret /></ToolButton>
          <ToolButton $w={22} aria-label="Sketch">
            <svg width="20" height="19" viewBox="0 0 20 19"><path d="M1 7c4-2 5 0 3 4-2 3 0 6 4 6" fill="none" stroke="#4a1c14" strokeWidth="1.500" /><path d="M8 12 18 1l.5 9L12 16z" fill="#d9331f" /><path d="m11 9 7-8 .3 5-5.300 5z" fill="#f58b6a" /><path d="m6 18 2-6 4 4z" fill="#533" /></svg>
          </ToolButton>
        </ToolSet>
        <ToolSet $gap={1}>
          {previewTools.map(([l, art], i) => <ToolButton key={l} $w={i === 2 ? 23 : 22} $on={i === 2} aria-label={l}>{art}</ToolButton>)}
          <ToolButton $w={8} as="span"><Divider /></ToolButton>
          {meshTools.map(([l, art]) => <ToolButton key={l} aria-label={l}>{art}</ToolButton>)}
          <Divider />
          <ToolButton $w={24} aria-label="Preview settings">
            <svg width="17" height="17" viewBox="0 0 17 17"><path d="m5 1.500 7 0 4 6.500-4 7.500H5L1 8z" fill="#6ea6ee" stroke="#2a4f96" /><path d="m5.500 2 6 0 1 4-4 3-6-1z" fill="#b4d4fb" /></svg>
          </ToolButton>
          <Caret />
        </ToolSet>
      </Toolbar>
      <Diagram />
      <StatusBar>
        <span>...</span>
        <Version>1.0.0007</Version>
      </StatusBar>
      <Taskbar>
        <StartButton aria-label="Inicio">
          <svg width="14" height="14" viewBox="0 0 14 14" fill="#fff"><path d="m0 2 6-1v5.500H0zM7 .9 14 0v6.500H7zM0 7.500h6V13l-6-1zM7 7.500h7V14l-7-.9z" /></svg>
        </StartButton>
        <SearchBox>
          <Search />
          <SearchInput placeholder="Escribe aquí para buscar" aria-label="Escribe aquí para buscar" />
        </SearchBox>
        <Apps>
          {apps.map((a) => (
            <AppButton key={a.name} $open={a.open} $focused={a.focused} aria-label={a.name}>
              {a.art}
              {a.badge && <CountBadge $right={0}>{a.badge}</CountBadge>}
            </AppButton>
          ))}
        </Apps>
        <Tray>
          <svg width="20" height="20" viewBox="0 0 20 20"><circle cx="9" cy="9.500" r="8.500" fill="#1a8fd0" stroke="#fff" strokeWidth="1.500" /><path d="M6 7.500c0-4 6-4 6-.5 0 2-3 2-3 5" fill="none" stroke="#fff" strokeWidth="2" /><circle cx="9" cy="14.500" r="1.200" fill="#fff" /><circle cx="16" cy="15" r="4" fill="#1e9ad8" /><path d="M16 12.500v1m0 1v3" stroke="#fff" strokeWidth="1.300" /></svg>
          <svg width="11" height="7" viewBox="0 0 11 7" fill="none" stroke="#fff" strokeWidth="1.200"><path d="m.5 6 5-5 5 5" /></svg>
          <svg width="14" height="14" viewBox="0 0 14 14"><path d="M1 9c-2-3 1-5 2-4 1-4 7-4 7 0 2 0 2 3 1 4z" fill="#bdbdbd" /><circle cx="9.500" cy="9.500" r="4" fill="#d5283c" /><path d="M7.500 9.500h4" stroke="#fff" strokeWidth="1.300" /></svg>
          <svg width="10" height="16" viewBox="0 0 10 16" fill="none" stroke="#fff"><rect x="2.500" y=".5" width="5" height="9" rx="1.500" fill="#fff" /><path d="M.5 6v5h9V6M5 11v4M2 15h6" /></svg>
          <svg width="13" height="8" viewBox="0 0 13 8"><path d="M.5.5h11v7H.5zM12 2.500h1v3h-1z" fill="none" stroke="#fff" /><path d="M2 2h5v4H2z" fill="#fff" /></svg>
          <svg width="11" height="11" viewBox="0 0 11 11" fill="none" stroke="#ddd"><path d="M.5 10.500c0-6 4-10 10-10M3.500 10.500c0-4 3-7 7-7M6.500 10.500c0-2 2-4 4-4" /><circle cx="9.500" cy="9.500" r="1" fill="#fff" /></svg>
          <svg width="14" height="12" viewBox="0 0 14 12" fill="none" stroke="#fff"><path d="M.5 4v4H3l3 3V1L3 4zM8 4q1.500 2 0 4M10 2.500q2.500 3.500 0 7M12 1q3.500 5 0 10" /></svg>
          <TrayText>ESP</TrayText>
          <Clock>10:55<br />09-03-2021</Clock>
          <Notifications aria-label="Notificaciones">
            <svg width="15" height="14" viewBox="0 0 15 14"><path d="M0 0h14v10H8l-3 3v-3H0z" fill="#fff" /><path d="M3 3h8M3 5.500h8M3 8h5" stroke="#3a4230" /></svg>
            <CountBadge $right={8}>14</CountBadge>
          </Notifications>
        </Tray>
      </Taskbar>
      <Preview />
    </Page>
  );
}
